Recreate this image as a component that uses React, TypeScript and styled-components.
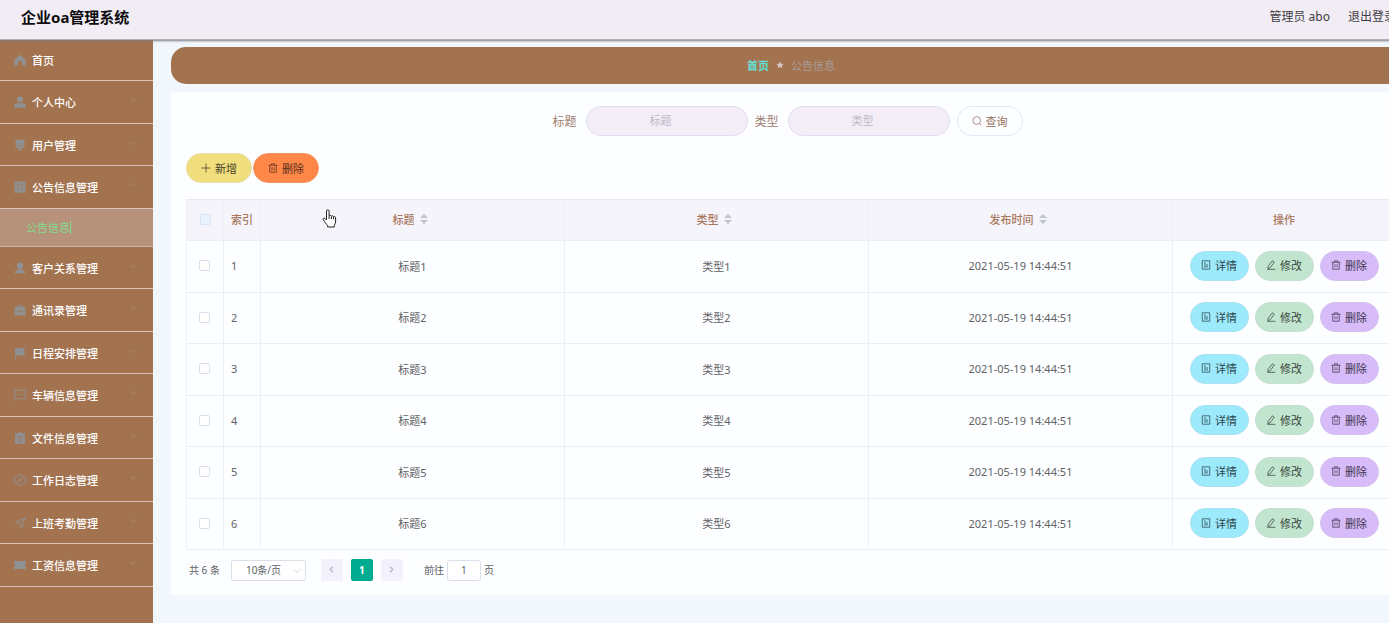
import React from "react";
import styled, { createGlobalStyle, css } from "styled-components";

const GlobalStyle = createGlobalStyle`
  *, *::before, *::after { box-sizing: border-box; }
  body {
    margin: 0;
    overflow-x: hidden;
    font-family: "Noto Sans", "Noto Sans CJK SC", sans-serif;
    font-size: 11px;
    color: #606266;
    background: #f2f7fe;
  }
  button, input, select { font: inherit; color: inherit; margin: 0; }
  button { cursor: pointer; }
  ul { list-style: none; margin: 0; padding: 0; }
  a { color: inherit; text-decoration: none; }
`;

/* ---------- icons ---------- */

const Svg = styled.svg<{ $size?: number }>`
  display: block;
  flex: none;
  width: ${(p) => p.$size ?? 10}px;
  height: ${(p) => p.$size ?? 10}px;
`;

const solidIcons: Record<string, React.ReactNode> = {
  home: <path d="M8 1 15.500 7.500V15H10.600V10.500A1.300 1.300 0 0 0 9.300 9.200H6.700A1.300 1.300 0 0 0 5.400 10.500V15H.5V7.500Z" />,
  user: (
    <>
      <circle cx="8" cy="4.600" r="4" />
      <path d="M.5 15.500v-2.700a3.200 3.200 0 0 1 3.200-3.200h8.600a3.200 3.200 0 0 1 3.200 3.200v2.700Z" />
    </>
  ),
  brush: <path d="M2 1h12v7.500H2ZM2 9.300h12v1.200a1.300 1.300 0 0 1-1.300 1.300H10V13.500a2 2 0 0 1-4 0v-1.700H3.300A1.300 1.300 0 0 1 2 10.500Z" />,
  grid: (
    <path d="M.5.5h4.600v4.600H.5ZM5.700.5h4.600v4.600H5.700ZM10.900.5h4.600v4.600h-4.600ZM.5 5.700h4.600v4.600H.5ZM5.700 5.700h4.600v4.600H5.700ZM10.900 5.700h4.600v4.600h-4.600ZM.5 10.900h4.600v4.600H.5ZM5.700 10.900h4.600v4.600H5.700ZM10.900 10.900h4.600v4.600h-4.600Z" />
  ),
  custom: (
    <path d="M8 .8a4 4 0 0 0-4 4c0 2 .9 3.600 2.200 4.300L5.800 10.400 2.200 11.600A1.600 1.600 0 0 0 1 13.200V15h14v-1.800a1.600 1.600 0 0 0-1.200-1.600L10.200 10.400 9.800 9.100C11.100 8.400 12 6.800 12 4.800A4 4 0 0 0 8 .8Z" />
  ),
  briefcase: <path d="M4.800 4V1.200h6.400V4H15v5H1V4ZM6.200 4h3.600V2.600H6.200ZM.5 9.800h6v1.400h3V9.800h6V15H.5Z" />,
  flag: <path d="M1.500 1H3.200v.8H15.500L13 6.300l2.500 4.700H3.200v4.500H1.500Z" />,
  list: (
    <path
      fillRule="evenodd"
      d="M5 .5h6V2h3.500V15.500h-13V2H5ZM4.500 5.500v1.100h7V5.500ZM4.500 8.500v1.100h7V8.500ZM4.500 11.500v1.100h7v-1.100Z"
    />
  ),
  ticket: <path d="M0 2.800h5.500l1 1 1-1H16v3.500a1.800 1.800 0 0 0 0 3.400v3.500H7.500l-1-1-1 1H0V9.700a1.800 1.800 0 0 0 0-3.400Z" />,
};

const lineIcons: Record<string, React.ReactNode> = {
  chat: (
    <>
      <path d="M1 1.500h14v11.500H4.500L1 15.200Z" />
      <path d="M4.300 7.500h1.400M7.300 7.500h1.400M10.300 7.500h1.400" strokeWidth="1.500" />
    </>
  ),
  compass: (
    <>
      <circle cx="8" cy="8" r="7.200" />
      <path d="M11 4.800 7.200 7 5 11.200 8.800 9Z" />
    </>
  ),
  plane: <path d="M1.200 7.500 14.800 1.500 10 14.800 7.800 8.700ZM7.800 8.700 14.800 1.500" />,
  search: (
    <>
      <circle cx="7.500" cy="7.200" r="6.200" />
      <path d="m12 11.700 2.700 3" />
    </>
  ),
  plus: <path d="M8 1v14M1 8h14" />,
  trash: <path d="M1 3.600h14M5.500 3.600V1.300h5v2.300M2.800 3.600v11.100h10.400V3.600M6.300 6.700v5M9.700 6.700v5" />,
  doc: <path d="M2 1.300h12v13.400H2ZM4.800 5h3M4.800 8h6.400M4.800 11h6.400" />,
  edit: <path d="M10.300 1.300 13.300 3.400 6.700 12.300 3 13.800 3.300 10.100ZM2 14.900h13" />,
  down: <path d="m2 5 6 6 6-6" />,
  up: <path d="m2 11 6-6 6 6" />,
  left: <path d="M10.500 3 5.500 8l5 5" strokeWidth="2.200" />,
  right: <path d="m5.500 3 5 5-5 5" strokeWidth="2.200" />,
};

function Icon({ name, size }: { name: string; size?: number }) {
  const solid = name in solidIcons;
  return (
    <Svg
      $size={size}
      viewBox="0 0 16 16"
      fill={solid ? "currentColor" : "none"}
      stroke={solid ? "none" : "currentColor"}
      strokeWidth="1.200"
      aria-hidden="true"
    >
      {solid ? solidIcons[name] : lineIcons[name]}
    </Svg>
  );
}

/* ---------- page frame ---------- */

const Page = styled.div`
  display: flex;
  flex-direction: column;
  width: calc(100% + 40px);
  min-height: 100vh;
`;

const Header = styled.header`
  position: relative;
  display: flex;
  align-items: center;
  justify-content: space-between;
  height: 40px;
  padding: 0 33px 5px 21px;
  background: #f2edf5;
  border-bottom: 1px solid #b3acb3;
  box-shadow: 0 1px 2px #7d7d84;
`;

const Title = styled.h1`
  margin: 0;
  font-size: 15px;
  line-height: 20px;
  color: #0b0b0d;
`;

const UserNav = styled.nav`
  display: flex;
  gap: 18px;
  font-size: 12px;
  line-height: 18px;
  color: #3e3c42;
`;

const Body = styled.div`
  display: flex;
  flex: 1;
`;

const Sidebar = styled.aside`
  flex: none;
  width: 153px;
  background: #a3734f;
`;

const MenuLink = styled.a`
  display: flex;
  align-items: center;
  gap: 6px;
  height: 42px;
  padding: 0 16px 0 14px;
  border-bottom: 1px solid #d9c4b7;
  color: #fff;
  font-weight: 500;
  > svg { color: #8f9294; }
  > svg:last-child:not(:first-child) {
    margin: 0 0 4px auto;
    color: #bf967b;
  }
`;

const MenuItem = styled.li`
  &:nth-child(even) > ${MenuLink} { height: 43px; }
  &:first-child > ${MenuLink} { height: 41px; }
`;

const SubLink = styled.a`
  display: flex;
  align-items: center;
  height: 38px;
  padding-left: 26px;
  background: #b6917c;
  border-bottom: 1px solid #cdb3a5;
  color: #84dc88;
  span { border-right: 1px solid #84dc88; line-height: 13px; }
`;

const Main = styled.main`
  flex: 1;
  min-width: 0;
  padding: 7px 18px 0;
  background: #f2f7fe;
`;

const Breadcrumb = styled.nav`
  display: flex;
  align-items: center;
  justify-content: center;
  gap: 7px;
  height: 37px;
  padding-bottom: 2px;
  border-radius: 15px 15px 0 15px;
  background: #a3734f;
  color: #a79a98;
  a { color: #62e0d6; font-weight: 700; }
  svg { color: #d4c6c0; }
`;

const Card = styled.section`
  margin-top: 8px;
  padding: 14px 15px;
  background: #fdfeff;
`;

/* ---------- controls ---------- */

const SearchForm = styled.form`
  display: flex;
  align-items: center;
  justify-content: center;
  gap: 7px;
  padding-right: 7px;
`;

const Field = styled.label`
  display: flex;
  align-items: center;
  gap: 9px;
  font-size: 12px;
  color: #a08070;
`;

const TextInput = styled.input`
  width: 162px;
  height: 30px;
  padding: 0 24px 1px 12px;
  border: 1px solid #e2dcf2;
  border-radius: 15px;
  background: #f3edf6;
  font-size: 11px;
  text-align: center;
  outline: none;
  &::placeholder { color: #bdb9ca; opacity: 1; }
`;

type Tone = "plain" | "yellow" | "orange" | "cyan" | "green" | "purple";

const tones: Record<Tone, ReturnType<typeof css>> = {
  plain: css`background: #fdfeff; border-color: #dfe6f5; color: #95705c;`,
  yellow: css`background: #f1de7d; border-color: #e6dca6; color: #46402c;`,
  orange: css`background: #ff8748; border-color: #f09a6c; color: #5a2f1c;`,
  cyan: css`background: #9deafc; border-color: #a9e2f2; color: #2c454d;`,
  green: css`background: #c2e5cf; border-color: #c6dfd0; color: #38463e;`,
  purple: css`background: #d7bcf9; border-color: #d4c2ee; color: #40364d;`,
};

const PillButton = styled.button<{ $tone: Tone; $wide?: boolean }>`
  display: inline-flex;
  align-items: center;
  justify-content: center;
  gap: 4px;
  width: ${(p) => (p.$wide ? 66 : 59)}px;
  height: 30px;
  padding: 0 0 1px;
  border: 1px solid;
  border-radius: 15px;
  white-space: nowrap;
  ${(p) => tones[p.$tone]}
`;

const Toolbar = styled.div`
  display: flex;
  gap: 1px;
  margin: 17px 0 16px;
`;

const CheckBox = styled.input`
  appearance: none;
  display: block;
  width: 11px;
  height: 11px;
  margin: 0 auto;
  border: 1px solid #dcdfe9;
  border-radius: 2px;
  background: #fff;
  &:disabled { background: #e9f2fd; border-color: #d9e4f5; }
  &:checked { background: #00ac90; }
`;

/* ---------- table ---------- */

const DataTable = styled.table`
  width: 100%;
  table-layout: fixed;
  border-collapse: separate;
  border-spacing: 0;
  border-top: 1px solid #e9e8f3;
  border-left: 1px solid #eff0f7;
  th, td {
    padding: 0 0 2px;
    border-right: 1px solid #eff0f7;
    border-bottom: 1px solid #eceef6;
    text-align: center;
  }
  th {
    height: 41px;
    background: #f5f4fb;
    color: #a9775c;
    font-weight: 500;
  }
  td { height: 52px; }
  td:first-child { padding-right: 2px; }
  tbody tr:nth-child(even) td { height: 51px; }
  th:nth-child(2), td:nth-child(2) { padding-left: 7px; text-align: left; }
`;

const Col = styled.col<{ $width?: number }>`
  ${(p) => p.$width && `width: ${p.$width}px;`}
`;

const SortHead = styled.span`
  display: inline-flex;
  align-items: center;
  svg { width: 8px; height: 10px; margin: 0 5px; }
`;

const RowActions = styled.div`
  display: flex;
  justify-content: center;
  gap: 6px;
`;

/* ---------- pagination ---------- */

const Pagination = styled.footer`
  display: flex;
  align-items: center;
  margin-top: 9px;
  padding-left: 3px;
  font-size: 10px;
  line-height: 14px;
`;

const SelectBox = styled.span`
  position: relative;
  margin: 0 15px 0 11px;
  select {
    display: block;
    appearance: none;
    width: 75px;
    height: 21px;
    padding: 0 20px 1px 14px;
    border: 1px solid #dcdfe9;
    border-radius: 2px;
    background: #fff;
  }
  svg {
    position: absolute;
    top: 7px;
    right: 5px;
    color: #b4b8c0;
    pointer-events: none;
  }
`;

const Pager = styled.div`
  display: flex;
  gap: 8px;
  margin-right: 21px;
`;

const PageButton = styled.button<{ $active?: boolean }>`
  display: grid;
  place-items: center;
  width: 22px;
  height: 22px;
  padding: 0 0 1px;
  border: 0;
  border-radius: 2px;
  font-weight: 700;
  background: ${(p) => (p.$active ? "#00ac90" : "#f4f1fd")};
  color: ${(p) => (p.$active ? "#fff" : "#b6b6c4")};
`;

const Jump = styled.label`
  display: flex;
  align-items: center;
  gap: 3px;
  input {
    width: 34px;
    height: 21px;
    padding: 0 0 1px;
    border: 1px solid #dcdfe9;
    border-radius: 3px;
    background: #fff;
    text-align: center;
  }
`;

const Pointer = styled.svg`
  position: absolute;
  left: 322px;
  top: 209px;
  width: 15px;
  height: 19px;
  pointer-events: none;
`;

/* ---------- content ---------- */

const menu: { icon: string; label: string; sub?: string }[] = [
  { icon: "home", label: "首页" },
  { icon: "user", label: "个人中心" },
  { icon: "brush", label: "用户管理" },
  { icon: "grid", label: "公告信息管理", sub: "公告信息" },
  { icon: "custom", label: "客户关系管理" },
  { icon: "briefcase", label: "通讯录管理" },
  { icon: "flag", label: "日程安排管理" },
  { icon: "chat", label: "车辆信息管理" },
  { icon: "list", label: "文件信息管理" },
  { icon: "compass", label: "工作日志管理" },
  { icon: "plane", label: "上班考勤管理" },
  { icon: "ticket", label: "工资信息管理" },
];

const rows = [1, 2, 3, 4, 5, 6].map((n) => ({
  id: n,
  title: `标题${n}`,
  type: `类型${n}`,
  time: "2021-05-19 14:44:51",
}));

function Sortable({ label }: { label: string }) {
  return (
    <SortHead>
      {label}
      <svg viewBox="0 0 8 10" fill="#c0c4cc" aria-hidden="true">
        <path d="M4 0 8 4H0ZM0 6h8L4 10Z" />
      </svg>
    </SortHead>
  );
}

export default function App() {
  return (
    <>
      <GlobalStyle />
      <Page>
        <Header>
          <Title>企业oa管理系统</Title>
          <UserNav>
            <span>管理员 abo</span>
            <a href="#logout">退出登录</a>
          </UserNav>
        </Header>
        <Body>
          <Sidebar>
            <ul>
              {menu.map((m) => (
                <MenuItem key={m.label}>
                  <MenuLink href="#menu">
                    <Icon name={m.icon} size={12} />
                    <span>{m.label}</span>
                    {m.icon !== "home" && <Icon name={m.sub ? "up" : "down"} size={8} />}
                  </MenuLink>
                  {m.sub && (
                    <SubLink href="#notice">
                      <span>{m.sub}</span>
                    </SubLink>
                  )}
                </MenuItem>
              ))}
            </ul>
          </Sidebar>
          <Main>
            <Breadcrumb>
              <a href="#home">首页</a>
              <Svg $size={8} viewBox="0 0 16 16" fill="currentColor" aria-hidden="true">
                <path d="m8 .8 2.200 4.700 5.100.6-3.800 3.500 1 5.100L8 12.200l-4.500 2.500 1-5.100L.7 6.100l5.100-.6Z" />
              </Svg>
              <span>公告信息</span>
            </Breadcrumb>
            <Card>
              <SearchForm onSubmit={(e) => e.preventDefault()}>
                <Field>
                  标题
                  <TextInput placeholder="标题" />
                </Field>
                <Field>
                  类型
                  <TextInput placeholder="类型" />
                </Field>
                <PillButton $tone="plain" $wide>
                  <Icon name="search" />
                  查询
                </PillButton>
              </SearchForm>
              <Toolbar>
                <PillButton $tone="yellow" $wide type="button">
                  <Icon name="plus" />
                  新增
                </PillButton>
                <PillButton $tone="orange" $wide type="button">
                  <Icon name="trash" />
                  删除
                </PillButton>
              </Toolbar>
              <DataTable>
                <colgroup>
                  <Col $width={37} />
                  <Col $width={37} />
                  <Col />
                  <Col />
                  <Col />
                  <Col $width={223} />
                </colgroup>
                <thead>
                  <tr>
                    <th><CheckBox type="checkbox" disabled aria-label="全选" /></th>
                    <th>索引</th>
                    <th><Sortable label="标题" /></th>
                    <th><Sortable label="类型" /></th>
                    <th><Sortable label="发布时间" /></th>
                    <th>操作</th>
                  </tr>
                </thead>
                <tbody>
                  {rows.map((r) => (
                    <tr key={r.id}>
                      <td><CheckBox type="checkbox" aria-label={r.title} /></td>
                      <td>{r.id}</td>
                      <td>{r.title}</td>
                      <td>{r.type}</td>
                      <td>{r.time}</td>
                      <td>
                        <RowActions>
                          <PillButton $tone="cyan"><Icon name="doc" />详情</PillButton>
                          <PillButton $tone="green"><Icon name="edit" />修改</PillButton>
                          <PillButton $tone="purple"><Icon name="trash" />删除</PillButton>
                        </RowActions>
                      </td>
                    </tr>
                  ))}
                </tbody>
              </DataTable>
              <Pagination>
                <span>共 6 条</span>
                <SelectBox>
                  <select aria-label="每页条数">
                    <option>10条/页</option>
                  </select>
                  <Icon name="down" size={8} />
                </SelectBox>
                <Pager>
                  <PageButton aria-label="上一页"><Icon name="left" size={9} /></PageButton>
                  <PageButton $active>1</PageButton>
                  <PageButton aria-label="下一页"><Icon name="right" size={9} /></PageButton>
                </Pager>
                <Jump>
                  前往
                  <input defaultValue="1" />
                  页
                </Jump>
              </Pagination>
            </Card>
          </Main>
        </Body>
      </Page>
      <Pointer viewBox="0 0 15 19" aria-hidden="true">
        <path
          d="M4.500 11V2.200a1.300 1.300 0 0 1 2.600 0V7c.3-.9 2-.9 2.300.3.500-.8 2-.6 2.200.5.700-.6 2-.3 2 1v4.200c0 1.200-1 2.200-1.300 3.500V18H5.700v-1.300C4.500 15.300 2.600 12.500 1.300 10.700c-.8-1.200.7-2.200 1.700-1.200Z"
          fill="#fff"
          stroke="#222"
        />
        <path d="M7.100 7v3M9.400 7.500V10M11.600 8v2.300" stroke="#222" />
      </Pointer>
    </>
  );
}
